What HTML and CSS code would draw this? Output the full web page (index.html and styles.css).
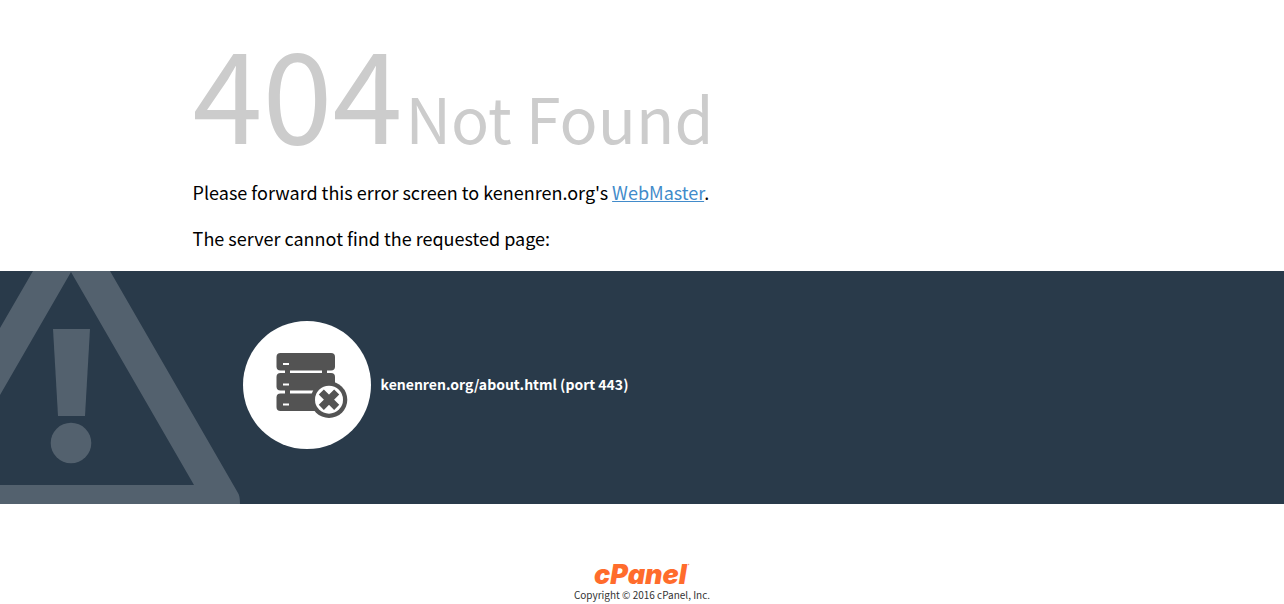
FILE: index.html
```html
<!DOCTYPE html>
<html lang="en">
<head>
<meta charset="utf-8">
<meta name="viewport" content="width=device-width, initial-scale=1">
<title>404 Not Found</title>
<link rel="stylesheet" href="styles.css">
</head>
<body>
<header class="container">
  <h1 class="status"><span class="status-code">404</span> <span class="status-reason">Not Found</span></h1>
  <p class="contact-info">Please forward this error screen to kenenren.org's <a href="mailto:webmaster@kenenren.org">WebMaster</a>.</p>
  <p class="reason-text">The server cannot find the requested page:</p>
</header>
<main class="additional-info">
  <svg class="warning" viewBox="0 0 240 233" aria-hidden="true">
    <path fill-rule="evenodd" d="M33 0H110L238 222Q240 225 240 233H0V214H194L71 1L0 124V57Z"/>
    <path d="M53 58H90L85 145H58Z"/>
    <circle cx="71" cy="172" r="20.3"/>
  </svg>
  <div class="container info-row">
    <span class="info-image">
      <svg viewBox="0 0 128 128" width="128" height="128" aria-hidden="true">
        <g fill="#535353">
          <rect x="33.5" y="32" width="58.5" height="17.5" rx="4"/>
          <rect x="33.5" y="52" width="58.5" height="17.5" rx="4"/>
          <rect x="33.5" y="72.5" width="58.5" height="17.5" rx="4"/>
          <path d="M42 48h5v26h-5zM79 48h5v26h-5z"/>
        </g>
        <path fill="#fff" d="M40 42h6v2h-6zM40 62.5h6v2h-6zM40 82.5h6v2h-6z"/>
        <circle cx="86" cy="78.700" r="18.300" fill="#535353"/>
        <circle cx="86" cy="78.700" r="14" fill="#fff"/>
        <path d="M78.300 71l15.400 15.400M93.700 71l-15.400 15.400" stroke="#535353" stroke-width="7.200"/>
      </svg>
    </span>
    <strong class="info-server">kenenren.org/about.html (port 443)</strong>
  </div>
</main>
<footer class="footer">
  <a class="footer-link" href="https://cpanel.com/">
    <svg class="logo" viewBox="0 0 96 22" width="96" height="22" role="img" aria-label="cPanel">
      <text x="0" y="21">cPanel</text>
      <circle cx="94.500" cy="1.500" r="0.800" fill-opacity="0.6"/>
    </svg>
    <span class="copyright">Copyright © 2016 cPanel, Inc.</span>
  </a>
</footer>
</body>
</html>
```
FILE: styles.css
```css
* { box-sizing: border-box; }
body {
  margin: 0;
  background: #fff;
  color: #000;
  font-family: "Noto Sans CJK SC", "Noto Sans", sans-serif;
  font-size: 14px;
  line-height: 20px;
}
.container { width: 70%; margin: 0 auto; }
.status { display: flex; flex-wrap: wrap; align-items: baseline; column-gap: 3px; margin: 0; color: #ccc; font-weight: 400; }
.status-code { font-size: 126px; line-height: 179px; }
.status-reason { font-size: 63px; line-height: 90px; }
.contact-info, .reason-text { margin: 0; font-size: 18px; line-height: 26px; }
.reason-text { padding: 20px 0; }
.contact-info a { color: #428bca; }
.additional-info { position: relative; background: #293a4a; color: #fff; }
.warning { position: absolute; top: 0; left: 0; width: 240px; height: 100%; fill: #53616e; }
.info-row { position: relative; display: flex; align-items: center; gap: 10px; padding: 50px 50px 55px; }
.info-image { display: flex; flex: none; border-radius: 50%; background: #fff; }
.info-server { padding-bottom: 3px; overflow-wrap: anywhere; }
.footer { display: flex; justify-content: center; padding-top: 59px; }
.footer-link { display: flex; flex-direction: column; align-items: center; color: #333; text-decoration: none; }
.logo { fill: #ff6c2c; overflow: visible; }
.logo text { font-family: Inter, sans-serif; font-size: 27px; font-style: italic; font-weight: 900; }
.copyright { padding-top: 2px; font-size: 10px; line-height: 16px; }
```
